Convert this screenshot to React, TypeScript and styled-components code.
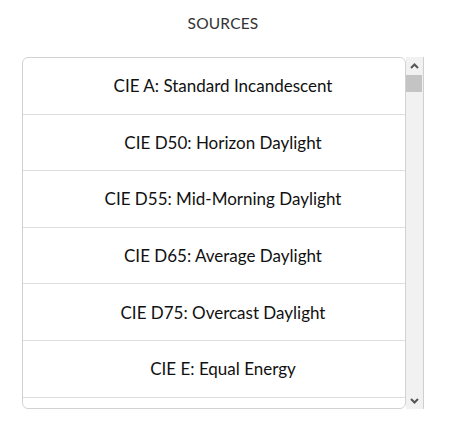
import React from "react";
import styled, { createGlobalStyle } from "styled-components";

const Global = createGlobalStyle`
  html, body { margin: 0; padding: 0; background: #fff; }
  body { font-family: Lato, "Open Sans", sans-serif; }
`;

const Page = styled.div`
  width: 451px;
  padding: 12px 27px 0 22px;
  box-sizing: border-box;
`;

const Title = styled.div`
  text-align: center;
  font-size: 15.5px;
  color: #333;
  letter-spacing: 0.2px;
  line-height: 22px;
  margin-bottom: 23px;
`;

const Frame = styled.div`
  display: flex;
  height: 352px;
  width: 402px;
`;

const List = styled.div`
  flex: 1;
  box-sizing: border-box;
  border: 1px solid #d2d2d2;
  border-radius: 6px;
  overflow: hidden;
`;

const Item = styled.div`
  height: 56.6px;
  box-sizing: border-box;
  border-bottom: 1px solid #dedede;
  padding-left: 18px;
  display: flex;
  align-items: center;
  justify-content: center;
  font-size: 17px;
  color: #111;
`;

const Scrollbar = styled.div`
  width: 18px;
  box-sizing: border-box;
  background: #f1f1f1;
  border-right: 1px solid #cfcfcf;
  display: flex;
  flex-direction: column;
`;

const Arrow = styled.div`
  height: 17px;
  display: flex;
  align-items: center;
  justify-content: center;
`;

const Track = styled.div`
  flex: 1;
  padding: 1px 1px 0 0;
`;

const Thumb = styled.div`
  height: 17px;
  background: #c4c4c4;
`;

const Chevron = ({ up }: { up?: boolean }) => (
  <svg width="9" height="6" viewBox="0 0 9 6">
    <path
      d={up ? "M1 5 L4.5 1.5 L8 5" : "M1 1 L4.5 4.5 L8 1"}
      fill="none"
      stroke="#555"
      strokeWidth="2"
    />
  </svg>
);

const sources = [
  "CIE A: Standard Incandescent",
  "CIE D50: Horizon Daylight",
  "CIE D55: Mid-Morning Daylight",
  "CIE D65: Average Daylight",
  "CIE D75: Overcast Daylight",
  "CIE E: Equal Energy",
];

export default function App() {
  return (
    <>
      <Global />
      <Page>
        <Title>SOURCES</Title>
        <Frame>
          <List>
            {sources.map((s) => (
              <Item key={s}>{s}</Item>
            ))}
          </List>
          <Scrollbar>
            <Arrow>
              <Chevron up />
            </Arrow>
            <Track>
              <Thumb />
            </Track>
            <Arrow>
              <Chevron />
            </Arrow>
          </Scrollbar>
        </Frame>
      </Page>
    </>
  );
}
